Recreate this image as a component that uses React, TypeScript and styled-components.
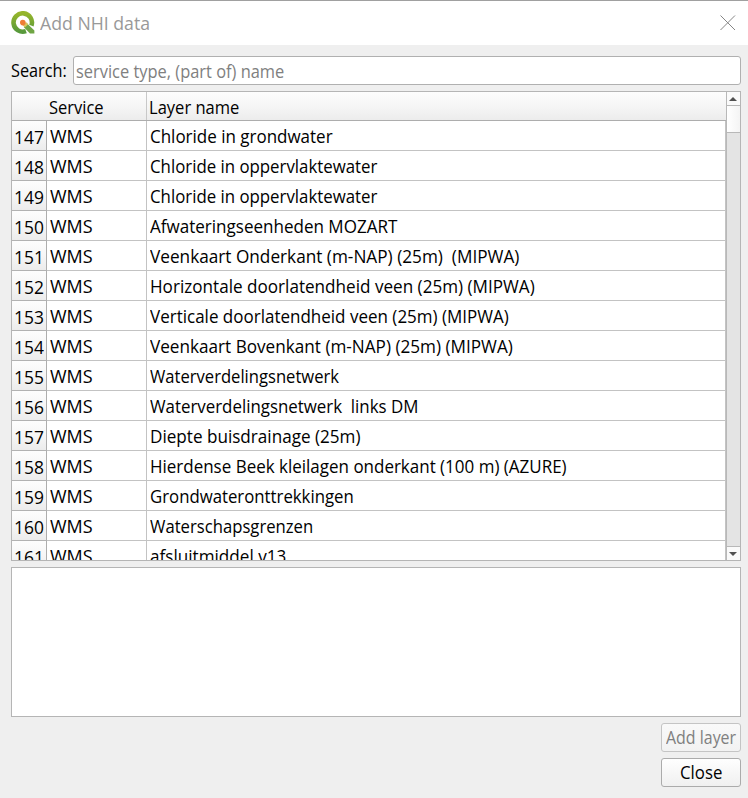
import React, { useLayoutEffect, useRef, useState } from "react";
import styled, { createGlobalStyle } from "styled-components";

const GlobalStyle = createGlobalStyle`
  * { box-sizing: border-box; }
  body {
    margin: 0;
    background: #efefef;
    font-family: "Open Sans", "Noto Sans", sans-serif;
    font-size: 18px;
    color: #000;
  }
`;

const Dialog = styled.div`
  width: 748px;
  height: 798px;
  display: flex;
  flex-direction: column;
  background: #efefef;
  overflow: hidden;
`;

const TitleBar = styled.header`
  height: 45px;
  flex: none;
  display: flex;
  align-items: center;
  padding: 0 12px 0 11px;
  border-top: 1px solid #a0a0a0;
  background: #fff;
  color: #999;
`;

const Title = styled.h1`
  margin: 0 auto 0 5px;
  font-size: 18px;
  font-weight: 400;
  line-height: 24px;
`;

const Content = styled.main`
  flex: 1;
  display: flex;
  flex-direction: column;
  padding: 11px 7px 11px 11px;
`;

const SearchRow = styled.label`
  display: flex;
  align-items: center;
  height: 29px;
  margin-bottom: 6px;
`;

const SearchLabel = styled.span`
  width: 62px;
  line-height: 31px;
`;

const SearchField = styled.div`
  flex: 1;
  height: 29px;
  padding-left: 2px;
  border: 1px solid #b0b0b0;
  border-radius: 3px;
  background: #fff;
  color: #808080;
  line-height: 29px;
`;

const TableFrame = styled.section`
  display: flex;
  height: 470px;
  border: 1px solid #b5b5b5;
  background: #fff;
`;

const Viewport = styled.div`
  flex: 1;
  height: 468px;
  overflow: hidden;
`;

const HeaderRow = styled.div`
  display: grid;
  grid-template-columns: 135px 1fr;
  grid-template-rows: 28px;
  height: 29px;
  border-bottom: 1px solid #adadad;
  background: linear-gradient(#fdfdfd, #f6f6f6 50%, #ececec);
`;

const HeaderCell = styled.div<{ $indent: number; $divider?: boolean }>`
  padding-left: ${(p) => p.$indent}px;
  border-right: ${(p) => (p.$divider ? "1px solid #c8c8c8" : "none")};
  line-height: 31px;
`;

const Row = styled.div`
  display: grid;
  grid-template-columns: 35px 100px 1fr;
  grid-template-rows: 30px;
  height: 30px;
  border-right: 1px solid #c3c3c3;
`;

const RowNumber = styled.div`
  padding-left: 2px;
  border-right: 1px solid #adadad;
  border-bottom: 1px solid #b2b2b2;
  background: linear-gradient(#fdfdfd, #f6f6f6 50%, #ececec);
  line-height: 32px;
`;

const Cell = styled.div<{ $divider?: boolean }>`
  padding-left: 3px;
  border-right: ${(p) => (p.$divider ? "1px solid #c3c3c3" : "none")};
  border-bottom: 1px solid #c3c3c3;
  line-height: 30px;
`;

const ScrollBar = styled.div`
  width: 14px;
  display: flex;
  flex-direction: column;
  border-left: 1px solid #b8b8b8;
  background: #e4e4e4;
`;

const ScrollButton = styled.div<{ $edge: "top" | "bottom" }>`
  height: 14px;
  display: flex;
  align-items: center;
  justify-content: center;
  padding-right: 1px;
  border-${(p) => p.$edge}: 1px solid #b8b8b8;
  background: #fafafa;
`;

const ScrollThumb = styled.div`
  height: 27px;
  margin-bottom: auto;
  border-bottom: 1px solid #b8b8b8;
  background: linear-gradient(90deg, #fff, #f4f4f4);
`;

const Details = styled.section`
  height: 150px;
  margin-top: 6px;
  border: 1px solid #b5b5b5;
  background: #fff;
`;

const Actions = styled.footer`
  display: flex;
  flex-direction: column;
  align-items: flex-end;
  gap: 6px;
  margin-top: 6px;
`;

const Button = styled.button`
  width: 80px;
  height: 29px;
  padding: 0;
  border: 1px solid #ababab;
  border-radius: 3px;
  background: linear-gradient(#fefefe, #f0f0f0);
  color: #000;
  font: inherit;
  line-height: 27px;
  &:disabled {
    border-color: #c4c4c4;
    background: linear-gradient(#f9f9f9, #f2f2f2);
    color: #808080;
  }
`;

const LabelBox = styled.span<{ $width: number }>`
  display: inline-block;
  width: ${(p) => p.$width}px;
  text-align: left;
  vertical-align: top;
`;

const Label = styled.span`
  display: inline-block;
  white-space: pre;
  vertical-align: top;
  transform-origin: 0 50%;
`;

/* Condenses or widens a label so that it takes the given width. */
function Fit({ width, children }: { width: number; children: string }) {
  const ref = useRef<HTMLSpanElement>(null);
  const [scale, setScale] = useState(1);
  useLayoutEffect(() => {
    if (ref.current) setScale(width / ref.current.offsetWidth);
  }, [width, children]);
  return (
    <LabelBox $width={width}>
      <Label ref={ref} style={{ transform: `scaleX(${scale})` }}>
        {children}
      </Label>
    </LabelBox>
  );
}

const layers: [number, string, number][] = [
  [147, "Chloride in grondwater", 183],
  [148, "Chloride in oppervlaktewater", 227],
  [149, "Chloride in oppervlaktewater", 227],
  [150, "Afwateringseenheden MOZART", 247],
  [151, "Veenkaart Onderkant (m-NAP) (25m)  (MIPWA)", 369],
  [152, "Horizontale doorlatendheid veen (25m) (MIPWA)", 385],
  [153, "Verticale doorlatendheid veen (25m) (MIPWA)", 359],
  [154, "Veenkaart Bovenkant (m-NAP) (25m) (MIPWA)", 363],
  [155, "Waterverdelingsnetwerk", 189],
  [156, "Waterverdelingsnetwerk  links DM", 268],
  [157, "Diepte buisdrainage (25m)", 210],
  [158, "Hierdense Beek kleilagen onderkant (100 m) (AZURE)", 417],
  [159, "Grondwateronttrekkingen", 204],
  [160, "Waterschapsgrenzen", 163],
  [161, "afsluitmiddel v13", 136],
];

const QgisLogo = () => (
  <svg width="24" height="24" viewBox="0 0 24 24">
    <defs>
      <linearGradient id="ring" x1="0" y1="0" x2="0" y2="1">
        <stop offset="0" stopColor="#96b52b" />
        <stop offset="1" stopColor="#57993b" />
      </linearGradient>
    </defs>
    <path
      d="M20.4 14.6A9.2 9.2 0 1 0 15 20.1"
      fill="none"
      stroke="url(#ring)"
      strokeWidth="4.6"
    />
    <path d="M13.5 13.4 16.4 12.8 23.4 19.6V22.5H19L12.9 16.2Z" fill="#6fa544" />
    <path d="M12 11.5h3.8l1.4 1.7-3.3 3.2-2-2z" fill="#d9c45c" />
    <circle cx="11.8" cy="11.6" r="2.8" fill="#ee7d36" />
  </svg>
);

const CloseIcon = () => (
  <svg width="16" height="16" viewBox="0 0 16 16">
    <path d="M.5.5l14.5 14.5M15 .5l-14.5 14.5" stroke="#858585" strokeWidth="1" />
  </svg>
);

const Arrow = ({ d }: { d: string }) => (
  <svg width="8" height="4" viewBox="0 0 8 4">
    <path d={d} fill="#505050" />
  </svg>
);

export default function App() {
  return (
    <>
      <GlobalStyle />
      <Dialog>
        <TitleBar>
          <QgisLogo />
          <Title>
            <Fit width={110}>Add NHI data</Fit>
          </Title>
          <CloseIcon />
        </TitleBar>
        <Content>
          <SearchRow>
            <SearchLabel>
              <Fit width={56}>Search:</Fit>
            </SearchLabel>
            <SearchField>
              <Fit width={208}>service type, (part of) name</Fit>
            </SearchField>
          </SearchRow>
          <TableFrame>
            <Viewport>
              <HeaderRow>
                <HeaderCell $indent={37} $divider>
                  <Fit width={55}>Service</Fit>
                </HeaderCell>
                <HeaderCell $indent={2}>
                  <Fit width={90}>Layer name</Fit>
                </HeaderCell>
              </HeaderRow>
              {layers.map(([id, name, width]) => (
                <Row key={id}>
                  <RowNumber>
                    <Fit width={30}>{String(id)}</Fit>
                  </RowNumber>
                  <Cell $divider>
                    <Fit width={43}>WMS</Fit>
                  </Cell>
                  <Cell>
                    <Fit width={width}>{name}</Fit>
                  </Cell>
                </Row>
              ))}
            </Viewport>
            <ScrollBar>
              <ScrollButton $edge="bottom">
                <Arrow d="M0 4 4 0 8 4Z" />
              </ScrollButton>
              <ScrollThumb />
              <ScrollButton $edge="top">
                <Arrow d="M0 0H8L4 4Z" />
              </ScrollButton>
            </ScrollBar>
          </TableFrame>
          <Details />
          <Actions>
            <Button disabled>
              <Fit width={70}>Add layer</Fit>
            </Button>
            <Button>
              <Fit width={42}>Close</Fit>
            </Button>
          </Actions>
        </Content>
      </Dialog>
    </>
  );
}
